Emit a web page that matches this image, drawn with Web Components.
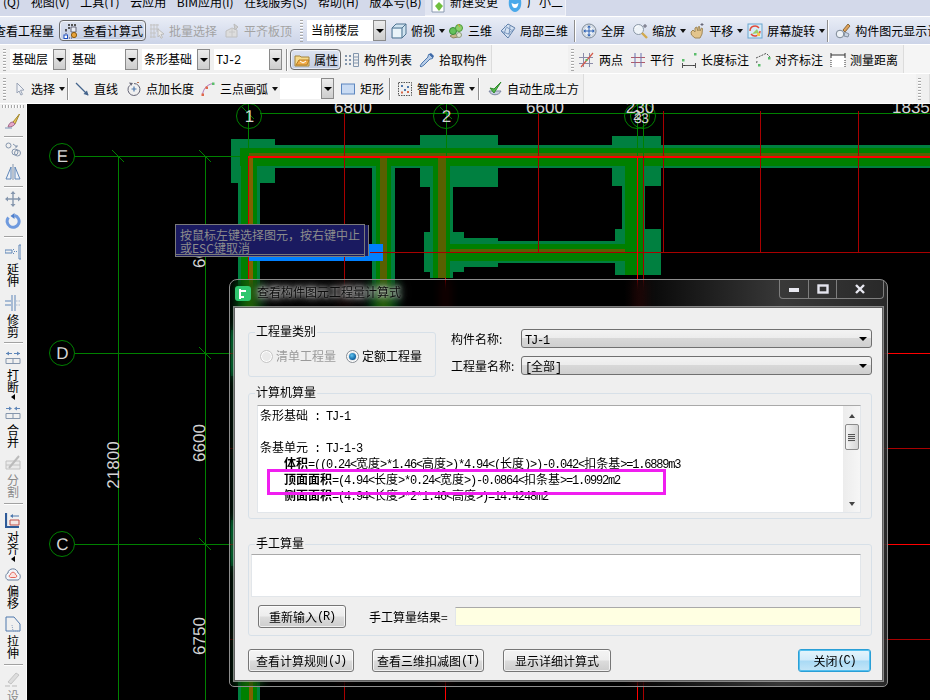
<!DOCTYPE html>
<html lang="zh"><head><meta charset="utf-8"><title>查看构件图元工程量计算式</title>
<style>
html,body{margin:0;padding:0;width:930px;height:700px;overflow:hidden;background:#000}
body{font:12px/16px "Noto Sans CJK SC","Liberation Sans",sans-serif;color:#000}
tt{font:12px/1 "Liberation Mono","Noto Sans CJK SC",monospace;letter-spacing:-1.2px}
</style></head><body>
<cad-app>
<cad-menubar>
  <span style="margin-left:3px">(Q)</span><span>视图(V)</span><span>工具(T)</span><span>云应用</span><span>BIM应用(I)</span><span>在线服务(S)</span><span>帮助(H)</span><span>版本号(B)</span>
  <cad-quick slot="quick"><cad-icon name="newdoc"></cad-icon><span>新建变更</span><cad-icon name="face" style="margin-left:5px"></cad-icon><span>广小二</span></cad-quick>
</cad-menubar>
<cad-toolrow kind="glass">
  <cad-tool style="margin-left:-6px">查看工程量</cad-tool>
  <cad-tool icon="calc" active style="margin-left:5px">查看计算式</cad-tool>
  <cad-tool icon="batch" disabled style="margin-left:3px">批量选择</cad-tool>
  <cad-tool icon="flat" disabled style="margin-left:7px">平齐板顶</cad-tool>
  <cad-grip style="margin-left:8px"></cad-grip>
  <cad-drop style="margin-left:4px;width:79px;--pad:4px">当前楼层</cad-drop>
  <cad-tool icon="cube" arrow style="margin-left:5px">俯视</cad-tool>
  <cad-tool icon="balls" style="margin-left:3px">三维</cad-tool>
  <cad-tool icon="wirecube" style="margin-left:8px">局部三维</cad-tool>
  <cad-sep style="margin-left:6px"></cad-sep>
  <cad-tool icon="full" style="margin-left:6px">全屏</cad-tool>
  <cad-tool icon="zoom" arrow style="margin-left:7px">缩放</cad-tool>
  <cad-tool icon="hand" arrow style="margin-left:3px">平移</cad-tool>
  <cad-tool icon="spin" arrow style="margin-left:4px">屏幕旋转</cad-tool>
  <cad-sep style="margin-left:2px"></cad-sep>
  <cad-tool icon="display" style="margin-left:7px">构件图元显示设置</cad-tool>
</cad-toolrow>
<cad-toolrow>
  <cad-panel style="width:492px;padding-top:1px">
    <cad-grip style="margin-left:3px"></cad-grip>
    <cad-drop style="margin-left:4px;width:56px">基础层</cad-drop>
    <cad-drop style="margin-left:4px;width:68px">基础</cad-drop>
    <cad-drop style="margin-left:4px;width:68px">条形基础</cad-drop>
    <cad-drop style="margin-left:4px;width:68px"><tt>TJ-2</tt></cad-drop>
    <cad-sep style="margin-left:4px"></cad-sep>
    <cad-tool icon="attr" active style="margin-left:3px">属性</cad-tool>
    <cad-tool icon="list" style="margin-left:3px">构件列表</cad-tool>
    <cad-tool icon="pick" style="margin-left:7px">拾取构件</cad-tool>
  </cad-panel>
  <cad-panel style="width:336px;margin-left:76px;padding-top:1px">
    <cad-grip style="margin-left:3px"></cad-grip>
    <cad-tool icon="twopt" style="margin-left:5px">两点</cad-tool>
    <cad-tool icon="para" style="margin-left:7px">平行</cad-tool>
    <cad-tool icon="lendim" style="margin-left:7px">长度标注</cad-tool>
    <cad-tool icon="aligndim" style="margin-left:6px">对齐标注</cad-tool>
    <cad-tool icon="measure" style="margin-left:7px">测量距离</cad-tool>
  </cad-panel>
</cad-toolrow>
<cad-toolrow style="height:30px">
  <cad-panel style="width:584px">
    <cad-grip style="margin-left:3px"></cad-grip>
    <cad-tool icon="cursor" arrow style="margin-left:5px">选择</cad-tool>
    <cad-sep style="margin-left:2px"></cad-sep>
    <cad-tool icon="line" style="margin-left:6px">直线</cad-tool>
    <cad-tool icon="addlen" style="margin-left:8px">点加长度</cad-tool>
    <cad-tool icon="arc" arrow style="margin-left:6px">三点画弧</cad-tool>
    <cad-drop style="margin-left:2px;width:54px"></cad-drop>
    <cad-tool icon="rect" style="margin-left:6px">矩形</cad-tool>
    <cad-sep style="margin-left:5px"></cad-sep>
    <cad-tool icon="smart" arrow style="margin-left:7px">智能布置</cad-tool>
    <cad-sep style="margin-left:3px"></cad-sep>
    <cad-tool icon="auto" style="margin-left:8px">自动生成土方</cad-tool>
  </cad-panel>
  <cad-panel style="width:14px;margin-left:332px"><cad-grip style="margin-left:2px"></cad-grip></cad-panel>
</cad-toolrow>
<cad-workspace>
  <cad-sidebar slot="side">
    <cad-grip horizontal style="margin-top:1px"></cad-grip>
    <cad-sidetool icon="brush" style="margin-top:5px"></cad-sidetool>
    <cad-sep side style="margin-top:7px"></cad-sep>
    <cad-sidetool icon="copy" style="margin-top:5px"></cad-sidetool>
    <cad-sidetool icon="mirror" style="margin-top:6px"></cad-sidetool>
    <cad-sep side style="margin-top:6px"></cad-sep>
    <cad-sidetool icon="move" style="margin-top:4px"></cad-sidetool>
    <cad-sidetool icon="rotate" style="margin-top:6px"></cad-sidetool>
    <cad-sep side style="margin-top:7px"></cad-sep>
    <cad-sidetool icon="extend" style="margin-top:7px">延伸</cad-sidetool>
    <cad-sidetool icon="trim" style="margin-top:8px">修剪</cad-sidetool>
    <cad-sep side style="margin-top:4px"></cad-sep>
    <cad-sidetool icon="break" more style="margin-top:7px">打断</cad-sidetool>
    <cad-sidetool icon="merge" style="margin-top:3px">合并</cad-sidetool>
    <cad-sidetool icon="split" disabled style="margin-top:7px">分割</cad-sidetool>
    <cad-sep side style="margin-top:5px"></cad-sep>
    <cad-sidetool icon="align" more style="margin-top:8px">对齐</cad-sidetool>
    <cad-sidetool icon="offset" style="margin-top:2px">偏移</cad-sidetool>
    <cad-sidetool icon="stretch" style="margin-top:7px">拉伸</cad-sidetool>
    <cad-sep side style="margin-top:5px"></cad-sep>
    <cad-sidetool icon="last" disabled style="margin-top:6px">设置</cad-sidetool>
  </cad-sidebar>
  <cad-canvas></cad-canvas>
  <cad-tooltip>按鼠标左键选择图元&#xFF0C;按右键中止<br>或ESC键取消</cad-tooltip>
  <cad-dialog caption="查看构件图元工程量计算式">
    <cad-row>
      <cad-group label="工程量类别" style="width:188px;height:45px;margin-top:3px;--pad:3px 0 0 11px">
        <cad-radio disabled>清单工程量</cad-radio>
        <cad-radio checked style="margin-left:10px">定额工程量</cad-radio>
      </cad-group>
      <cad-fields style="margin-left:15px">
        <span>构件名称:</span><cad-combo><tt>TJ-1</tt></cad-combo>
        <span>工程量名称:</span><cad-combo><tt>[</tt>全部<tt>]</tt></cad-combo>
      </cad-fields>
    </cad-row>
    <cad-group label="计算机算量" style="height:126px;margin-top:16px;--pad:11px 10px 0 8px">
      <cad-textbox style="height:108px;flex:1">
        <cad-line>条形基础<tt> : TJ-1</tt></cad-line>
        <cad-line>&nbsp;</cad-line>
        <cad-line>条基单元<tt> : TJ-1-3</tt></cad-line>
        <cad-line indent><b>体积</b><tt>=((0.24&lt;</tt>宽度<tt>&gt;*1.46&lt;</tt>高度<tt>&gt;)*4.94&lt;(</tt>长度<tt>)&gt;)-0.042&lt;</tt>扣条基<tt>&gt;=1.6889m3</tt></cad-line>
        <cad-line indent><b>顶面面积</b><tt>=(4.94&lt;</tt>长度<tt>&gt;*0.24&lt;</tt>宽度<tt>&gt;)-0.0864&lt;</tt>扣条基<tt>&gt;=1.0992m2</tt></cad-line>
        <cad-line indent><b>侧面面积</b><tt>=(4.94&lt;</tt>长度<tt>&gt;*2*1.46&lt;</tt>高度<tt>&gt;)=14.4248m2</tt></cad-line>
        <cad-mark></cad-mark>
        <cad-scroll slot="bar"></cad-scroll>
      </cad-textbox>
    </cad-group>
    <cad-group label="手工算量" style="height:92px;margin-top:25px;--pad:9px 10px 0 2px;--dir:column">
      <cad-textbox style="height:43px"></cad-textbox>
      <cad-row style="margin-top:8px;align-items:center">
        <cad-btn style="margin-left:7px;width:88px">重新输入<tt> (R)</tt></cad-btn>
        <span style="margin-left:23px;width:78px;white-space:nowrap">手工算量结果=</span>
        <cad-input style="margin-left:8px;flex:1"></cad-input>
      </cad-row>
    </cad-group>
    <cad-row style="margin-top:13px">
      <cad-btn style="width:106px">查看计算规则<tt>(J)</tt></cad-btn>
      <cad-btn style="width:112px;margin-left:18px">查看三维扣减图<tt>(T)</tt></cad-btn>
      <cad-btn style="width:108px;margin-left:19px">显示详细计算式</cad-btn>
      <cad-btn primary style="width:73px;margin-left:187px">关闭<tt>(C)</tt></cad-btn>
    </cad-row>
  </cad-dialog>
</cad-workspace>
</cad-app>
<script>
const svg=(b)=>`<svg xmlns="http://www.w3.org/2000/svg" width="16" height="16" viewBox="0 0 16 16" fill="none">${b}</svg>`;
const ICONS={
calc:`<g fill="#555"><rect x="5" y="1" width="2" height="2"/><rect x="8" y="1" width="2" height="2"/><rect x="11" y="1" width="2" height="2"/><rect x="5" y="4" width="2" height="2"/><rect x="11" y="4" width="2" height="2"/><rect x="2" y="6" width="2" height="2"/></g><path d="M8 4h5v5H8z" fill="#e8edf5" stroke="#667"/><path d="M3 8v7h6" stroke="#446" stroke-dasharray="1 1"/><rect x="1" y="12" width="3.500" height="3.500" fill="#fff" stroke="#1d4fc0"/><circle cx="11" cy="12" r="2.600" fill="#e8a33a" stroke="#8a5a10"/>`,
batch:`<path d="M1 2h9M1 6h9M1 10h6M1 14h6M2 1v14M5 1v14M8 1v8" stroke="#c4c4c4"/><path d="M9 6l6 5-3 .5 1.500 3-1.500.8-1.500-3L9 14z" fill="#e8e8e8" stroke="#bdbdbd"/>`,
flat:`<path d="M2 14V8l6-3 5 2v7z" fill="#ddd" stroke="#c0c0c0"/><path d="M8 5V14M5 9h6" stroke="#c8c8c8"/><path d="M10 1l4 3-3 3z" fill="#d0d0d0" stroke="#bbb"/>`,
cube:`<path d="M1 5l4-4h10v10l-4 4H1z" fill="#cfe3f0" stroke="#4e7390"/><path d="M1 5h10v10M11 5l4-4" stroke="#4e7390"/><path d="M2 6h8v8H2z" fill="#e9f3f9"/>`,
balls:`<path d="M2 13l5-3 3 4-5 1z" fill="#c7b68a" stroke="#8f8460"/><circle cx="5" cy="8" r="3.500" fill="#65c25c" stroke="#3a8a38"/><circle cx="11" cy="5" r="3.500" fill="#8fd06a" stroke="#4b9a3c"/><circle cx="11" cy="12" r="2.500" fill="#dfe5d0" stroke="#8b9a7a"/><path d="M10 1l2 3" stroke="#d9a02d"/>`,
wirecube:`<path d="M8 1l7 4-7 10L1 8z" fill="#d4e1f2" stroke="#5f7fa8"/><path d="M4.500 3l7 4M1 8l7 3 7-6M6 5l-2 6M10 3l-1 9" stroke="#7b98bf"/>`,
full:`<circle cx="8" cy="8" r="7" fill="#e8eef6" stroke="#7b8794"/><circle cx="8" cy="8" r="5.500" stroke="#c4ccd6"/><path d="M8 3v10M3 8h10" stroke="#2e62b5"/><path d="M8 2.500l-2 2h4zM8 13.500l-2-2h4zM2.500 8l2-2v4zM13.500 8l-2-2v4z" fill="#2e62b5"/>`,
zoom:`<circle cx="6.500" cy="6.500" r="5" fill="#eef3f8" stroke="#8a97a6"/><path d="M10 10l5 5" stroke="#d2a94e" stroke-width="2.400"/><path d="M13 1v4M11 3h4" stroke="#667"/><path d="M3 5a4 4 0 0 1 3-2" stroke="#fff"/>`,
hand:`<path d="M2 9l2-2 2 2V5l1.500-1L9 8V4l1.500-.5L11 8l1.500-3 1 .5L13 11l-2 4H6L2.500 12z" fill="#e3c48c" stroke="#a08858"/><path d="M13 0v3M11.500 1.500h3" stroke="#667"/>`,
spin:`<rect x="1" y="1" width="14" height="14" fill="#d8ebf7" stroke="#6aa6cf"/><path d="M3 8a5 5 0 0 1 9-3M13 8a5 5 0 0 1-9 3" stroke="#e04a3a" stroke-width="1.400"/><path d="M5 11l5-5 2 4z" fill="#9bcf6a"/><path d="M10 10h3v3h-3z" fill="#f2c94c"/>`,
display:`<circle cx="5" cy="11" r="3.800" fill="#eef2f7" stroke="#7b8794"/><path d="M8 7l5-6 2 2-5 6z" fill="#e0a25b" stroke="#8a6a3a"/><path d="M10 9l4 2-1 3-4-1z" fill="#c9d4e2" stroke="#8490a0"/>`,
attr:`<path d="M1 4h5l1 1h8v9H1z" fill="#f5d98b" stroke="#a5853d"/><path d="M2 13l3-5h10l-2 5z" fill="#f2ad4a" stroke="#b67d24"/><path d="M6 9l3 2 3-2" stroke="#fff"/>`,
list:`<g fill="#8396ad"><rect x="1" y="3" width="2" height="2"/><rect x="1" y="7" width="2" height="2"/><rect x="1" y="11" width="2" height="2"/><rect x="5" y="3" width="2" height="2"/><rect x="5" y="7" width="2" height="2"/><rect x="5" y="11" width="2" height="2"/></g><path d="M9.500 1.500h5v13h-5zM9.500 5h5M9.500 8h5M9.500 11h5" stroke="#8396ad"/>`,
pick:`<path d="M10 2l4 4-2 1-1 0-6 6-3 2-1-1 2-3 6-6 0-1z" fill="#b7cde8" stroke="#4f78ad"/><path d="M10 2l2-1 3 3-1 2z" fill="#3f6aa8"/>`,
twopt:`<path d="M0 5.500h14M0 11.500h14M4.500 1v14M10.500 1v14" stroke="#8c8ca8"/><path d="M2 15L14 1" stroke="#d45a4a" stroke-width="1.200"/><rect x="6.500" y="7" width="2" height="2" fill="#5bb85b"/>`,
para:`<path d="M1 5.500h14M1 10.500h14" stroke="#b05a6a"/><path d="M5 1v14M11 1v14" stroke="#6a72b0"/>`,
lendim:`<path d="M1 13.500h14M1.500 11v5M14.500 11v5" stroke="#555"/><path d="M4 13l-2 .5 2 .5zM12 13l2 .5-2 .5z" fill="#333"/><rect x="1" y="7" width="2.500" height="2.500" fill="#5bbd6b"/><rect x="13" y="1" width="2.500" height="2.500" fill="#5bbd6b"/>`,
aligndim:`<path d="M1 6l11-5M2 9l-.5 3M12 2l3 3" stroke="#555" stroke-dasharray="2 1"/><rect x="3" y="12" width="2.500" height="2.500" fill="#5bbd6b"/><rect x="13" y="5" width="2.500" height="2.500" fill="#5bbd6b"/>`,
measure:`<rect x="1" y="3" width="14" height="12" fill="#fff"/><path d="M1 1v5M15 1v5M1 3h14" stroke="#333"/><path d="M1 15V8M15 15V8" stroke="#333" stroke-dasharray="1 1"/>`,
cursor:`<path d="M6 2l7 7-3.500.3 2 4-1.600.7-1.800-4L6 12z" fill="#f0f2f6" stroke="#99a3b5"/>`,
line:`<path d="M2 2l12 12" stroke="#44648c" stroke-width="1.200"/><path d="M14.500 14.500l-5-1.500 3.500-3.500z" fill="#44648c"/>`,
addlen:`<path d="M8 2.500A6 6 0 1 1 3.500 4.500" stroke="#667"/><path d="M3 1.500l4 .5-2 3z" fill="#667"/><path d="M8 5.500v5M5.500 8h5" stroke="#4f78ad" stroke-width="1.200"/><path d="M11 1.500h2" stroke="#c0704a"/>`,
arc:`<path d="M2.500 14C3 8 7 3.500 13 2.500" stroke="#708" stroke-opacity=".5"/><rect x="1.500" y="12.500" width="2.500" height="2.500" fill="#e0694a"/><rect x="5.500" y="5.500" width="2.500" height="2.500" fill="#e0694a"/><rect x="12" y="1.500" width="2.500" height="2.500" fill="#5bbd6b"/>`,
rect:`<rect x="1.500" y="3" width="13" height="10" fill="#c9dbf3" stroke="#5c86bf"/>`,
smart:`<path d="M1.500 1.500h13v13h-13z" stroke="#555" stroke-dasharray="1.500 1"/><g fill="#4f78ad"><rect x="4" y="4" width="2" height="2"/><rect x="10" y="5" width="2" height="2"/><rect x="7" y="8" width="2" height="2"/></g><g fill="#d86a4a"><rect x="4" y="10.500" width="2" height="2"/><rect x="10" y="10" width="2" height="2"/></g>`,
auto:`<path d="M2 10c2 5 10 5 12 0z" fill="#c7cfe0" stroke="#7c86a0"/><path d="M3 7l4 5 7-11-7 7z" fill="#55b84e" stroke="#2f8a2c"/>`,
newdoc:`<path d="M2 0h9l3 3v12H2z" fill="#fff" stroke="#8a9ab0"/><path d="M9 5l4 4-4 5-4-5z" fill="#6fbf3e"/>`,
face:`<path d="M2 3c3-2 9-2 12 0 1 6-1 11-6 12C3 14 1 9 2 3z" fill="#4aa9ea"/><path d="M4.500 6c2 1.500 5 1.500 7 0-.500 3-1.500 5-3.500 5S5 9 4.500 6z" fill="#fff"/>`,
brush:`<path d="M14.500 1L8 9l2 2z" fill="#e9c65a" stroke="#a58a30"/><path d="M8 9c-3 0-4 2-5 5 3 0 6-1 7-3z" fill="#e7a6c6" stroke="#a06a88"/><path d="M0 15h7" stroke="#7a92b5"/>`,
copy:`<circle cx="3.500" cy="3.500" r="2.500" stroke="#8596ad"/><circle cx="10" cy="10" r="3" stroke="#8596ad"/><circle cx="12.500" cy="11" r="3" stroke="#8596ad"/><path d="M8 2l4 3M12 5V3M12 5h-2" stroke="#8596ad"/>`,
mirror:`<path d="M8 0v16" stroke="#8596ad"/><path d="M6 3v12H1zM10 3v12h5z" stroke="#5f86b8" fill="#eef2f8"/>`,
move:`<path d="M8 1v14M1 8h14" stroke="#8596ad" stroke-width="1.400"/><path d="M8 0l-2.500 3h5zM8 16l-2.500-3h5zM0 8l3-2.500v5zM16 8l-3-2.500v5z" fill="#8596ad"/>`,
rotate:`<path d="M3.500 4.500a6 6 0 1 0 6-2" stroke="#6f9ade" stroke-width="3"/><path d="M9.500 0l-4 3 4 3z" fill="#4f7fcc"/>`,
extend:`<path d="M0 6h7v3H0z" stroke="#5f86b8"/><path d="M9 7.500h4" stroke="#5f86b8" stroke-dasharray="1 1"/><path d="M14 1h2v14h-2z" stroke="#5f86b8"/><path d="M8.500 5v1M8.500 9v1" stroke="#5f86b8"/>`,
trim:`<path d="M0 6h6M0 10h6" stroke="#5f86b8"/><path d="M7 0v16M10 0v16" stroke="#5f86b8"/><path d="M11 6h5M11 10h5" stroke="#a9bad0" stroke-dasharray="1.500 1"/>`,
break:`<path d="M1 3.500h6M15 3.500H9" stroke="#5f86b8"/><path d="M1 3.500l3-2v4zM15 3.500l-3-2v4z" fill="#5f86b8"/><path d="M1 8.500h14v5H1zM8 8.500v5" stroke="#8596ad"/>`,
merge:`<path d="M1 3.500h5M15 3.500h-5" stroke="#5f86b8"/><path d="M7 3.500l-3-2v4zM9 3.500l3-2v4z" fill="#5f86b8"/><path d="M1 8.500h14v5H1zM8 8.500v5" stroke="#8596ad"/>`,
split:`<path d="M1 6h14v8H1zM1 10h14" stroke="#c2c2c2" fill="#eaeaea"/><path d="M4 13L14 1" stroke="#bbb" stroke-width="2"/>`,
align:`<path d="M1 1v14h13" stroke="#2e5a98" stroke-width="2.200"/><path d="M14 4H6" stroke="#4f78ad"/><path d="M5 4l3-2v4z" fill="#4f78ad"/><path d="M5 8h9v5H5z" stroke="#c0504a" fill="#f5e6e4"/>`,
offset:`<path d="M3 14C0 13 0 8 3 7c0-5 9-6 10 0 3 1 3 6 0 7z" stroke="#6a7f9c" fill="#f3f6fa"/><path d="M5.500 11.500C3.500 11 4 9 5.500 8.500 6 5.500 10 5.500 10.500 8.500c1.500.5 2 2.500 0 3z" stroke="#e4655a" fill="#fbe2de"/>`,
stretch:`<path d="M1 1h8l6 7v7H1z" stroke="#4f78ad"/><path d="M15 15H8l-1-6" stroke="#8aa0bd" stroke-dasharray="1 1"/>`,
last:`<path d="M3 11l8-9 3 2-8 9z" fill="#ddd" stroke="#c4c4c4"/><path d="M0 15h5M7 15h5" stroke="#bbb"/>`
};
const def=(name,css,html,init)=>customElements.define(name,class extends HTMLElement{
  connectedCallback(){ if(this.shadowRoot) return;
    const r=this.attachShadow({mode:'open'});
    r.innerHTML=`<style>${css}</style>`+(typeof html==='function'?html(this):html);
    if(init) init(this,r);
  }});
def('cad-app',`:host{display:flex;flex-direction:column;width:930px;height:700px;overflow:hidden;background:#f4f4f4}`,`<slot></slot>`);
def('cad-menubar',`:host{display:flex;height:16px;flex:none;background:#d3d9ea;overflow:hidden;position:relative}
 .m{display:flex;gap:10.600px;height:12px;margin-top:-6px;white-space:nowrap;width:425px;flex:none}
 ::slotted(span){display:block;flex:none}`,`<div class="m"><slot></slot></div><slot name="quick"></slot>`);
def('cad-quick',`:host{display:flex;align-items:flex-start;gap:4px;width:135px;height:15px;padding-left:5px;background:#e1e5f1;border-right:1px solid #f0f2f8;border-bottom:1px solid #f0f2f8;white-space:nowrap;overflow:hidden}
 ::slotted(span){display:block;margin-top:-6px}
 ::slotted(cad-icon){margin-top:-3px}`,`<slot></slot>`);
def('cad-toolrow',`:host{display:flex;align-items:center;height:29px;flex:none;overflow:hidden;background:#f5f5f5;box-sizing:border-box;border-bottom:1px solid #fff}
 :host([kind=glass]){background:linear-gradient(#e9edf6,#ccd4e8);border-top:1px solid #fff;border-bottom:1px solid #fff}`,`<slot></slot>`);
def('cad-panel',`:host{display:flex;align-items:center;flex:none;height:100%;background:#f0f0f0;border-right:1px solid #dcdcdc;box-sizing:border-box}`,`<slot></slot>`);
def('cad-tool',`:host{display:inline-flex;align-items:center;flex:none;height:20px;white-space:nowrap;box-sizing:border-box}
 .i{margin-right:4px;display:flex}
 :host([active]){height:21px;border:1px solid #6b6b6b;border-radius:4px;padding:0 2px 0 3px;background:linear-gradient(#dde3f0,#c3cde3);box-shadow:inset 0 0 0 1px rgba(255,255,255,.6)}
 :host([disabled]){color:#a3a3a3}
 .a{width:0;height:0;border:3.500px solid transparent;border-top:4px solid #111;border-bottom:0;margin-left:4px}`,
 t=>(t.hasAttribute('icon')?`<span class="i"><cad-icon name="${t.getAttribute('icon')}"></cad-icon></span>`:'')+`<slot></slot>`+(t.hasAttribute('arrow')?`<span class="a"></span>`:''));
def('cad-icon',`:host{display:inline-block;width:16px;height:16px;flex:none;line-height:0}`,t=>svg(ICONS[t.getAttribute('name')]||''));
def('cad-sep',`:host{display:block;flex:none;width:1px;height:22px;background:#8e8e8e;box-shadow:1px 0 0 #fff}
 :host([side]){width:19px;height:1px;margin-left:4px;background:#a2a2a2;box-shadow:0 1px 0 #fff}`,``);
def('cad-grip',`:host{display:block;flex:none;width:3px;height:22px;background:repeating-linear-gradient(#a8a8a8 0 1px,#fff 1px 2px,transparent 2px 3px)}
 :host([horizontal]){width:22px;height:3px;margin-left:2px;background:repeating-linear-gradient(90deg,#a8a8a8 0 1px,#fff 1px 2px,transparent 2px 3px)}`,``);
def('cad-drop',`:host{display:flex;flex:none;height:21px;background:#fff;box-sizing:border-box;white-space:nowrap}
 .t{flex:1;overflow:hidden;padding-left:var(--pad,2px);line-height:19px}
 .b{width:13px;box-sizing:border-box;border:1px solid #8a8a8a;background:linear-gradient(#ececec,#cdcdcd);display:flex;align-items:center;justify-content:center}
 .b i{width:0;height:0;border:4px solid transparent;border-top:4px solid #000;border-bottom:0}`,`<div class="t"><slot></slot></div><div class="b"><i></i></div>`);
def('cad-workspace',`:host{display:flex;flex:1;position:relative;min-height:0;overflow:hidden;background:#000}`,`<slot name="side"></slot><slot></slot>`);
def('cad-sidebar',`:host{display:flex;flex-direction:column;align-items:flex-start;width:26px;flex:none;background:#f0f0f0;border-right:1px solid #fbfbfb;overflow:hidden;height:596px}`,`<slot></slot>`);
def('cad-sidetool',`:host{display:flex;flex-direction:column;align-items:center;width:26px;flex:none;position:relative}
 .t{width:13px;line-height:12px;text-align:center;margin-top:3px}
 :host([disabled]){color:#8a8a8a}
 .m{width:0;height:0;border:3px solid transparent;border-right:4px solid #000;border-left:0;margin:1px 0 0 0}`,
 t=>`<cad-icon name="${t.getAttribute('icon')}"></cad-icon>`+(t.textContent.trim()?`<div class="t"><slot></slot></div>`:'')+(t.hasAttribute('more')?`<div class="m"></div><div style="height:2px"></div>`:''));
def('cad-canvas',`:host{display:block;flex:1;min-width:0;height:596px;background:#000}
 svg{display:block} text{font:17px "Liberation Sans",sans-serif;fill:#d4d4d4}`,
 ()=>{
  const G='#008000',O='#008040',B='#586000',R='#ff0000',D='#a80000';
  const r=(x,y,w,h,c)=>`<rect x="${x}" y="${y}" width="${w}" height="${h}" fill="${c}"/>`;
  const l=(a,b,c,d,s)=>`<line x1="${a}" y1="${b}" x2="${c}" y2="${d}" stroke="${s}"/>`;
  const tick=(x,y)=>l(x-6,y-6,x+6,y+6,G);
  const circ=(x,y,t)=>`<circle cx="${x}" cy="${y}" r="12.500" stroke="${G}" fill="none" style="shape-rendering:auto"/>`+(t?`<text x="${x+.5}" y="${y+6}" text-anchor="middle">${t}</text>`:'');
  let s='';
  s+=r(231,139,44,44,O)+r(420,135,78,52,O)+r(612,136,49,50,O)+r(424,232,40,40,O)+r(615,229,46,46,O)+r(450,238,48,29,O);
  s+=r(231,330,44,46,O)+r(231,520,44,46,O);
  s+=r(240,145,690,23,O)+r(240,148,690,18,G)+r(248,153,682,3,B);
  s+=r(238,168,22,532,O)+r(241,158,16,542,G)+r(249,158,4,542,'#806000');
  s+=r(372,168,23,400,O)+r(376,158,15,410,G)+r(380,158,7,410,B);
  s+=r(430,168,23,110,O)+r(433,158,17,120,G)+r(438,158,8,120,B);
  s+=r(622,168,23,107,O)+r(625,158,18,117,G);
  s+=r(450,241,175,22,O)+r(450,244,175,17,G)+r(450,249,175,3,B);
  s+=r(249,244,134,17,'#0080ff');
  s+=r(75,156,174,1,G)+r(75,353,154,1,G)+r(75,544,154,1,G)+r(118,157,1,543,G)+r(205,157,1,543,G);
  s+=r(248,104,1,52,G)+r(446,104,1,52,G)+r(637,104,1,52,G)+r(643,104,1,52,G)+r(260,113,670,1,G);
  s+=tick(118.5,156.500)+tick(205.5,156.500)+tick(205.5,353.500)+tick(205.5,544.500)+tick(248.5,113.500)+tick(446.5,113.500);
  s+=circ(62,156,'E')+circ(62,353,'D')+circ(62,544,'C')+circ(249,116,'1')+circ(446,116,'2');
  s+=circ(637,116)+circ(643,116);
  s+=`<text x="353" y="113" text-anchor="middle">6800</text><text x="545" y="113" text-anchor="middle">6600</text><text x="640" y="113" text-anchor="middle">230</text><text x="892" y="113">1835</text>`;
  s+=`<text x="637" y="120" text-anchor="middle" style="font-size:14px">2</text><text x="638" y="123" text-anchor="middle" style="font-size:14px">3</text><text x="645" y="123" text-anchor="middle" style="font-size:14px">3</text>`;
  const v=(x,y,t)=>`<text transform="rotate(-90 ${x} ${y})" x="${x}" y="${y}" text-anchor="middle">${t}</text>`;
  s+=v(119,465,'21800')+v(205,443,'6600')+v(205,636,'6750')+v(205,249,'6600');
  s+=r(344,113,1,165,D)+r(538,113,1,139,D)+r(663,111,1,141,D)+r(760,111,1,141,D)+r(858,111,1,141,D)+r(370,252,560,1,D);
  s+=r(248,157,1,123,'#d00000')+r(248,156,682,2,R)+r(637,156,1,300,R)+r(643,156,1,300,D);
  s+=r(229,353,701,1,R)+r(229,544,701,1,R)+r(229,448,701,1,D)+r(229,639,701,1,D);
  s+=r(344,278,1,422,D)+r(445,278,1,422,R)+r(637,456,1,244,R)+r(643,456,1,244,D);
  return `<svg xmlns="http://www.w3.org/2000/svg" width="903" height="596" viewBox="27 104 903 596" shape-rendering="crispEdges" style="text-rendering:geometricPrecision">${s}</svg>`;
 });
def('cad-tooltip',`:host{position:absolute;left:175px;top:120px;width:190px;height:33px;box-sizing:border-box;background:#1a1a60;color:#8c8c8c;border:1px solid #7a7a7a;border-bottom:3px double #7a7a7a;padding:3px 0 0 4px;line-height:13px;white-space:nowrap;box-shadow:4px 0 0 -1px #1a1a60,5px 0 0 -1px #7a7a7a}`,`<slot></slot>`);
def('cad-dialog',`:host{position:absolute;left:229px;top:175px;width:659px;height:408px;box-sizing:border-box;display:flex;flex-direction:column;border:1px solid #8d8d8d;border-radius:8px 8px 5px 5px;overflow:hidden;background:linear-gradient(90deg,rgba(0,0,0,.2),rgba(0,0,0,.15) 60%,rgba(72,72,72,.78) 84%,rgba(58,58,58,.7));backdrop-filter:blur(6px);-webkit-backdrop-filter:blur(6px)}
 .bar{display:flex;height:27px;flex:none;padding-left:5px;box-sizing:border-box}
 .ico{margin-top:6px;width:16px;height:15px;border-radius:3px;background:#2fc76f;display:flex;align-items:center;justify-content:center;flex:none}
 .cap{margin:4px 0 0 6px;line-height:15px;color:#0c0c0c;white-space:nowrap;text-shadow:0 0 3px rgba(190,190,190,.95),0 0 6px rgba(190,190,190,.9),0 0 10px rgba(190,190,190,.8),0 0 14px rgba(190,190,190,.6)}
 .win{margin-left:auto;margin-right:3px;display:flex;height:19px;box-sizing:border-box;border:1px solid #7e7e7e;border-top:0;border-radius:0 0 4px 4px;width:105px}
 .win div{display:flex;align-items:center;justify-content:center;border-right:1px solid #7e7e7e;box-sizing:border-box}
 .win div:last-child{border:0;flex:1}
 .client{flex:1;margin:0 4px 5px;border:1px solid #5e5e5e;box-shadow:0 0 0 1px rgba(190,190,190,.65);background:#efefef;box-sizing:border-box;padding:21px 10px 0 13px;display:flex;flex-direction:column;min-height:0}`,
 t=>`<div class="bar"><div class="ico"><svg xmlns="http://www.w3.org/2000/svg" width="12" height="12" viewBox="0 0 12 12" fill="none"><path d="M3 1v10M3 3h6M3 9h4" stroke="#fff" stroke-width="2"/></svg></div><div class="cap">${t.getAttribute('caption')}</div>
 <div class="win"><div style="width:29px"><svg xmlns="http://www.w3.org/2000/svg" width="12" height="8" viewBox="0 0 12 8"><rect x="1" y="3" width="10" height="4" fill="#e8e8f0"/></svg></div><div style="width:28px"><svg xmlns="http://www.w3.org/2000/svg" width="12" height="10" viewBox="0 0 12 10"><rect x="1.500" y="1.500" width="9" height="7" fill="none" stroke="#e4e4ee" stroke-width="2.400"/></svg></div><div><svg xmlns="http://www.w3.org/2000/svg" width="12" height="10" viewBox="0 0 12 10"><path d="M2 1l8 8M10 1L2 9" stroke="#e8e8f0" stroke-width="2.400"/></svg></div></div></div>
 <div class="client"><slot></slot></div>`);
def('cad-row',`:host{display:flex;flex:none}`,`<slot></slot>`);
def('cad-group',`:host{display:block;flex:none;position:relative;box-sizing:border-box;border:1px solid #d7e0e8;border-radius:3px}
 .l{position:absolute;left:6px;top:-10px;line-height:16px;background:#efefef;padding:0 1px;white-space:nowrap}
 .c{display:flex;flex-direction:var(--dir,row);align-items:stretch;padding:var(--pad,0);box-sizing:border-box;height:100%}`,
 t=>`<div class="l">${t.getAttribute('label')}</div><div class="c"><slot></slot></div>`);
def('cad-radio',`:host{display:inline-flex;align-items:center;gap:3px;white-space:nowrap;height:100%}
 :host([disabled]){color:#9a9a9a}
 i{width:13px;height:13px;box-sizing:border-box;border-radius:50%;border:1px solid #8a8f96;background:#e6e8ea;display:flex;align-items:center;justify-content:center;box-shadow:inset 0 0 0 1px #fff}
 :host([disabled]) i{border-color:#c6c6c6;background:#eaeaea}
 b{width:7px;height:7px;border-radius:50%;background:radial-gradient(circle at 40% 35%,#5fc3f0,#0d5f9e 70%)}`,
 t=>`<i>${t.hasAttribute('checked')?'<b></b>':''}</i><slot></slot>`);
def('cad-fields',`:host{display:grid;grid-template-columns:70px 351px;grid-template-rows:19px 19px;row-gap:8px;align-items:center;white-space:nowrap}`,`<slot></slot>`);
def('cad-combo',`:host{display:flex;align-items:center;height:19px;box-sizing:border-box;border:1px solid #707070;border-radius:3px;background:linear-gradient(#f3f3f3 0,#ececec 48%,#d8d8d8 50%,#cfcfcf 100%);padding-left:3px;position:relative;line-height:16px}
 .t{flex:1}
 i{width:0;height:0;border:4px solid transparent;border-top:4px solid #000;border-bottom:0;border-left-width:4px;margin-right:4px}`,`<div class="t"><slot></slot></div><i></i>`);
def('cad-textbox',`:host{display:flex;position:relative;box-sizing:border-box;background:#fff;border:1px solid #e2e6ea;border-top-color:#a9a9a9;overflow:hidden;min-width:0}
 .c{flex:1;padding:1px 0 0 2px;min-width:0;white-space:nowrap;overflow:hidden}`,`<div class="c"><slot></slot></div><slot name="bar"></slot>`);
def('cad-line',`:host{display:block;height:16px;line-height:16px}
 :host([indent]){padding-left:24px}`,`<slot></slot>`);
def('cad-mark',`:host{position:absolute;left:9px;top:63px;width:399px;height:26px;box-sizing:border-box;border:3px solid #f01ef0}`,``);
def('cad-scroll',`:host{display:flex;flex-direction:column;align-items:center;width:17px;flex:none;background:linear-gradient(90deg,#ececec,#f6f6f6)}
 .up,.dn{width:0;height:0;border:3.500px solid transparent;border-bottom:4px solid #444;border-top:0;margin-top:8px}
 .dn{border-top:4px solid #444;border-bottom:0;margin-top:auto;margin-bottom:6px}
 .th{margin-top:6px;width:14px;height:26px;box-sizing:border-box;border:1px solid #8b8b8b;border-radius:2px;background:linear-gradient(90deg,#f4f4f4,#d5d5d5);display:flex;flex-direction:column;align-items:center;justify-content:center;gap:1px}
 .th i{width:7px;height:1px;background:#555;box-shadow:0 1px 0 #ddd}`,`<div class="up"></div><div class="th"><i></i><i></i><i></i><i></i></div><div class="dn"></div>`);
def('cad-btn',`:host{display:flex;align-items:center;justify-content:center;flex:none;height:23px;box-sizing:border-box;border:1px solid #767676;border-radius:3px;background:linear-gradient(#f4f4f4 0,#ededed 48%,#dcdcdc 52%,#cdcdcd 100%);white-space:nowrap;box-shadow:inset 0 0 0 1px rgba(255,255,255,.7)}
 :host([primary]){border-color:#2a9fd6;border-width:1px;background:linear-gradient(#e6f5fc 0,#cfeafa 48%,#a9daf5 52%,#c4e6f8 100%);box-shadow:inset 0 0 0 1px #54bfee}`,`<slot></slot>`);
def('cad-input',`:host{display:block;height:19px;box-sizing:border-box;background:#ffffe2;border:1px solid #e2e6ea;border-top-color:#a9a9a9}`,``);
</script>
</body></html>
